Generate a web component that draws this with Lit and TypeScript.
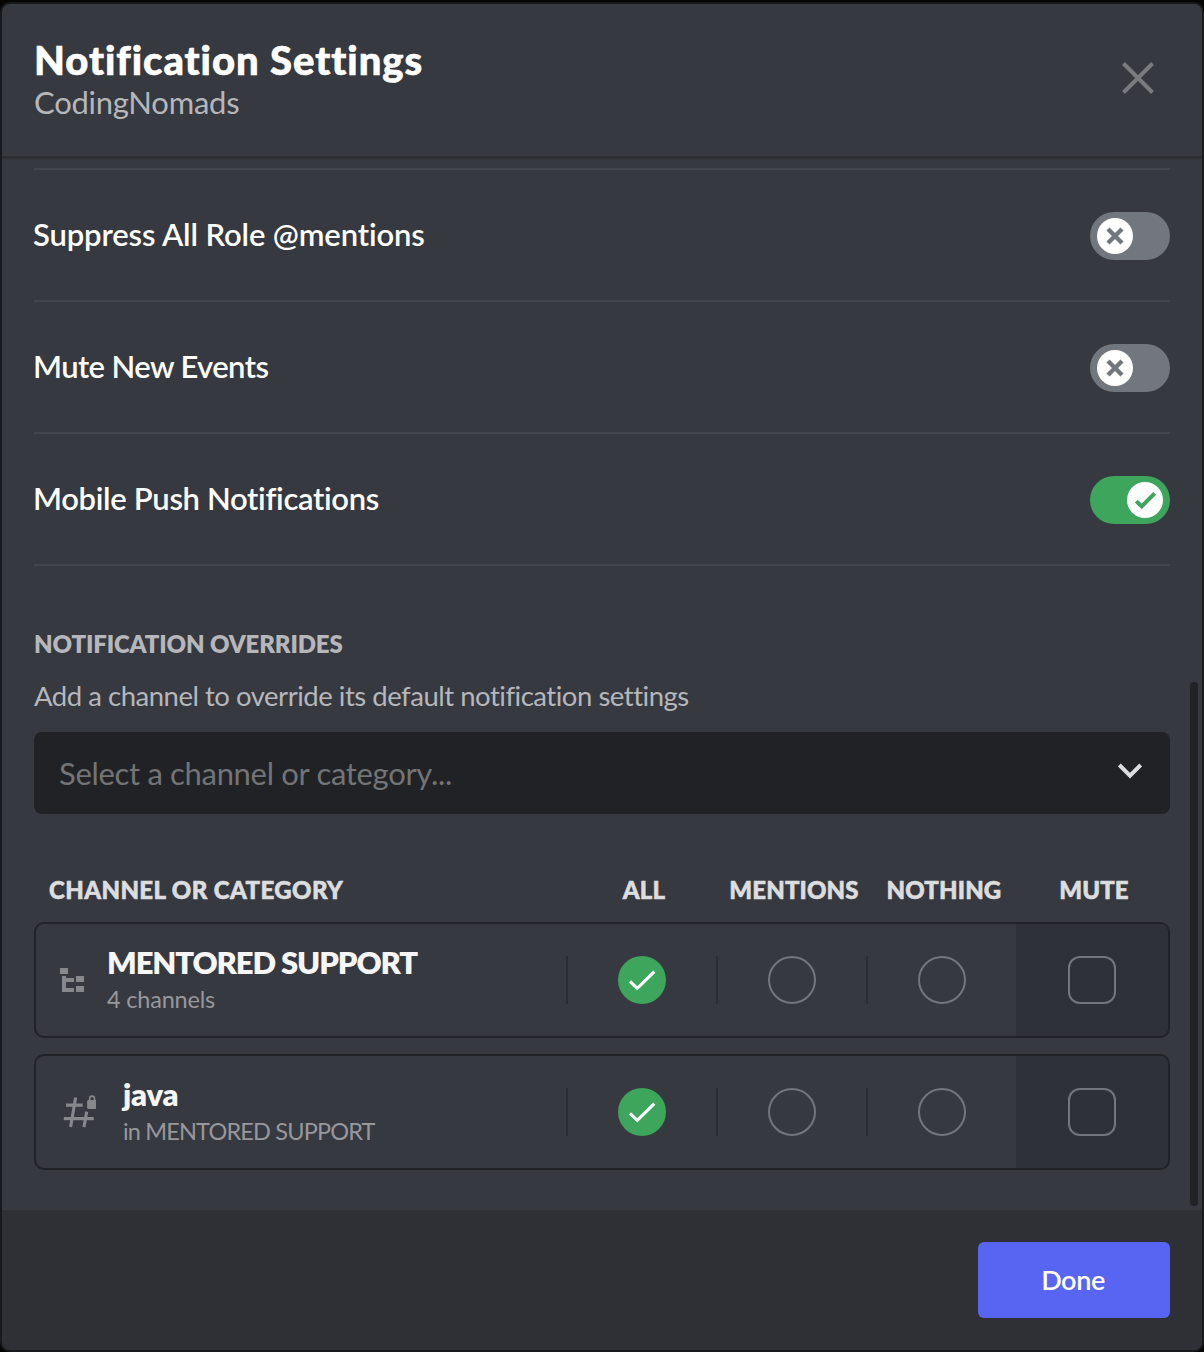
import { LitElement, html, css, svg } from "lit";
import { customElement, property, state } from "lit/decorators.js";
import { classMap } from "lit/directives/class-map.js";

@customElement("toggle-switch")
class ToggleSwitch extends LitElement {
  @property({ type: Boolean, reflect: true }) on = false;

  static styles = css`
    :host { display: block; flex: none; }
    .track {
      display: flex; align-items: center; justify-content: flex-start;
      width: 80px; height: 48px; box-sizing: border-box; padding: 0 7px;
      border: 0; border-radius: 24px; background: #72767d; color: #72767d;
    }
    .on { justify-content: flex-end; background: #3ea55d; color: #3ea55d; }
    svg { display: block; width: 36px; height: 36px; }
  `;

  render() {
    return html`
      <button class=${classMap({ track: true, on: this.on })} role="switch" aria-checked=${this.on}>
        <svg viewBox="-18 -18 36 36" fill="none" stroke="currentColor">
          <circle r="18" fill="#fff" stroke="none" />
          ${this.on
            ? svg`<path d="M-8.7 1.1L-3.3 6.5L9.7 -6.6" stroke-width="4" />`
            : svg`<path d="M-7 -7L7 7M7 -7L-7 7" stroke-width="4.4" />`}
        </svg>
      </button>
    `;
  }
}

@customElement("override-row")
class OverrideRow extends LitElement {
  @property() name = "";
  @property() detail = "";
  @property() kind = "category";

  static styles = css`
    :host { display: block; }
    .card {
      display: grid; grid-template-columns: 1fr 150px 150px 150px 152px;
      height: 116px; box-sizing: border-box; overflow: hidden;
      border: 2px solid #212225; border-radius: 10px;
    }
    .channel { display: flex; align-items: center; padding-left: 24px; }
    .icon { display: block; flex: none; fill: #87888c; }
    .category .icon { width: 24px; height: 24px; margin-right: 23px; }
    .text { display: flex; flex-direction: column; white-space: nowrap; margin-bottom: 1px; }
    .private .icon { width: 36px; height: 36px; margin-right: 27px; fill: none; stroke: #87888c; }
    .name { font-size: 31px; line-height: 37px; font-weight: 800; color: #f6f6f7; letter-spacing: -1.12px; }
    .private .name { letter-spacing: -0.2px; }
    .detail { font-size: 23.5px; line-height: 35px; color: #96989d; letter-spacing: -0.2px; padding-top: 1px; margin-bottom: -1px; }
    .private .detail { letter-spacing: -0.83px; }
    .option { display: flex; align-items: center; justify-content: center; }
    .sep { width: 2px; height: 48px; background: #2b2c30; }
    .fill { flex: 1; display: flex; justify-content: center; }
    .ring { width: 48px; height: 48px; box-sizing: border-box; border: 2px solid #72767d; border-radius: 50%; }
    .box { width: 48px; height: 48px; box-sizing: border-box; border: 2px solid #72767d; border-radius: 12px; }
    .mute { background: #2f3138; }
    .check { display: block; width: 48px; height: 48px; }
  `;

  private icon() {
    return this.kind === "category"
      ? html`<svg class="icon" viewBox="0 0 24 24">
          <path d="M0 0H8V6H0ZM2 8H6V10H14V14H6V20H14V24H2ZM16 8H24V14H16ZM16 18H24V24H16Z" />
        </svg>`
      : html`<svg class="icon" viewBox="-1.6 0.9 36 36" stroke-width="3.1">
          <path d="M4.4 12H21M2.2 25.5H32.2" />
          <path d="M14 4.3L9 34M25.1 18.5L22.3 34" />
          <path d="M28.1 8V5.4a2.4 2.4 0 0 1 4.8 0V8" stroke-width="1.6" />
          <rect x="25.5" y="6.8" width="9.9" height="9" rx="1.6" fill="#87888c" stroke="none" />
        </svg>`;
  }

  render() {
    return html`
      <div class="card">
        <div class="channel ${this.kind}">
          ${this.icon()}
          <div class="text">
            <span class="name">${this.name}</span>
            <span class="detail">${this.detail}</span>
          </div>
        </div>
        <div class="option">
          <span class="sep"></span>
          <span class="fill">
            <svg class="check" viewBox="-24 -24 48 48">
              <circle r="24" fill="#3ea55d" />
              <path d="M-12 1.4L-4.7 8.4L12.3 -8.4" fill="none" stroke="#fff" stroke-width="3" />
            </svg>
          </span>
        </div>
        <div class="option"><span class="sep"></span><span class="fill"><span class="ring"></span></span></div>
        <div class="option"><span class="sep"></span><span class="fill"><span class="ring"></span></span></div>
        <div class="option mute"><span class="box"></span></div>
      </div>
    `;
  }
}

@customElement("app-root")
class AppRoot extends LitElement {
  @state() private settings = [
    { label: "Suppress All Role @mentions", on: false, cls: "l1" },
    { label: "Mute New Events", on: false, cls: "l2" },
    { label: "Mobile Push Notifications", on: true, cls: "l3" },
  ];

  static styles = css`
    :host {
      display: block; height: 1352px; box-sizing: border-box; padding: 2px 0 0;
      background: #050505;
      font-family: Lato, "Liberation Sans", sans-serif;
      font-variant-ligatures: none;
    }
    .modal {
      position: relative; display: flex; flex-direction: column;
      width: 1204px; height: 1350px; box-sizing: border-box;
      border: 2px solid #18191c; border-radius: 10px; overflow: hidden;
      background: #363940; white-space: nowrap;
    }
    header {
      display: flex; justify-content: space-between; align-items: flex-start;
      height: 154px; box-sizing: border-box; padding: 33px 46px 0 32px;
      border-bottom: 2px solid #2c2d31; box-shadow: 0 1px 1px #303238;
      flex: none;
    }
    h1 {
      margin: 0; font-size: 40px; line-height: 46px; font-weight: 900; color: #fff;
      letter-spacing: 0.95px; -webkit-text-stroke: 0.6px #fff;
    }
    .server { margin-top: -1px; font-size: 31px; line-height: 40px; color: #b5b7bb; letter-spacing: -0.25px; }
    .close { display: block; width: 36px; height: 36px; margin-top: 23px; }
    main { flex: 1; padding: 10px 32px 0; }
    .setting {
      display: flex; align-items: center; justify-content: space-between;
      height: 132px; box-sizing: border-box; padding-top: 2px; border-bottom: 2px solid #42454c;
    }
    .settings { border-top: 2px solid #42454c; }
    .label { margin: 0 0 4px -1px; font-size: 31px; line-height: 40px; font-weight: 600; color: #fff; }
    .l1 { letter-spacing: -0.13px; }
    .l2 { letter-spacing: -0.6px; }
    .l3 { letter-spacing: -0.33px; }
    h2 { margin: 62px 0 0; font-size: 24px; line-height: 32px; font-weight: 800; color: #b5b7bb; letter-spacing: -0.15px; }
    .hint { margin-top: 16px; font-size: 27.5px; line-height: 40px; color: #b5b7bb; letter-spacing: -0.48px; }
    .select {
      display: flex; align-items: center; justify-content: space-between;
      height: 82px; box-sizing: border-box; margin-top: 16px; padding: 0 28px 0 25px;
      border-radius: 8px; background: #212225;
      font-size: 31px; color: #737475; letter-spacing: -0.32px;
    }
    .chevron { display: block; width: 24px; height: 16px; margin-top: -5px; }
    .columns {
      display: grid; grid-template-columns: 1fr 150px 150px 150px 150px;
      margin: 60px 0 17px; padding: 0 1px 0 15px;
      font-size: 24px; line-height: 31px; font-weight: 900; color: #dcddde;
      letter-spacing: 0.15px; -webkit-text-stroke: 0.6px #dcddde;
    }
    .lead { letter-spacing: 0.4px; }
    .col { text-align: center; }
    .rows { display: grid; gap: 16px; }
    footer {
      display: flex; justify-content: flex-end; flex: none;
      height: 140px; box-sizing: border-box; padding: 32px 32px 0; background: #2f3035;
    }
    .done {
      width: 192px; height: 76px; padding: 0 2px 2px 0; border: 0; border-radius: 6px;
      background: #5865f2; color: #fff; font: 600 27px Lato, "Liberation Sans", sans-serif;
      letter-spacing: -0.4px;
    }
    .thumb {
      position: absolute; top: 678px; right: 4px; width: 8px; height: 524px;
      border-radius: 4px; background: #212225;
    }
  `;

  render() {
    return html`
      <div class="modal">
        <header>
          <div>
            <h1>Notification Settings</h1>
            <div class="server">CodingNomads</div>
          </div>
          <svg class="close" viewBox="-18 -18 36 36">
            <path d="M-14.5 -14.5L14.5 14.5M14.5 -14.5L-14.5 14.5" fill="none" stroke="#797b7f" stroke-width="4" />
          </svg>
        </header>
        <main>
          <div class="settings">
            ${this.settings.map(
              (s) => html`<div class="setting">
                <span class="label ${s.cls}">${s.label}</span>
                <toggle-switch ?on=${s.on}></toggle-switch>
              </div>`
            )}
          </div>
          <h2>NOTIFICATION OVERRIDES</h2>
          <div class="hint">Add a channel to override its default notification settings</div>
          <div class="select">
            <span>Select a channel or category...</span>
            <svg class="chevron" viewBox="0 0 24 16">
              <path d="M1.3 1.9L12 12.6L22.7 1.9" fill="none" stroke="#dcddde" stroke-width="4" />
            </svg>
          </div>
          <div class="columns">
            <span class="lead">CHANNEL OR CATEGORY</span>
            <span class="col">ALL</span>
            <span class="col">MENTIONS</span>
            <span class="col">NOTHING</span>
            <span class="col">MUTE</span>
          </div>
          <div class="rows">
            <override-row kind="category" name="MENTORED SUPPORT" detail="4 channels"></override-row>
            <override-row kind="private" name="java" detail="in MENTORED SUPPORT"></override-row>
          </div>
        </main>
        <footer><button class="done">Done</button></footer>
        <div class="thumb"></div>
      </div>
    `;
  }
}
